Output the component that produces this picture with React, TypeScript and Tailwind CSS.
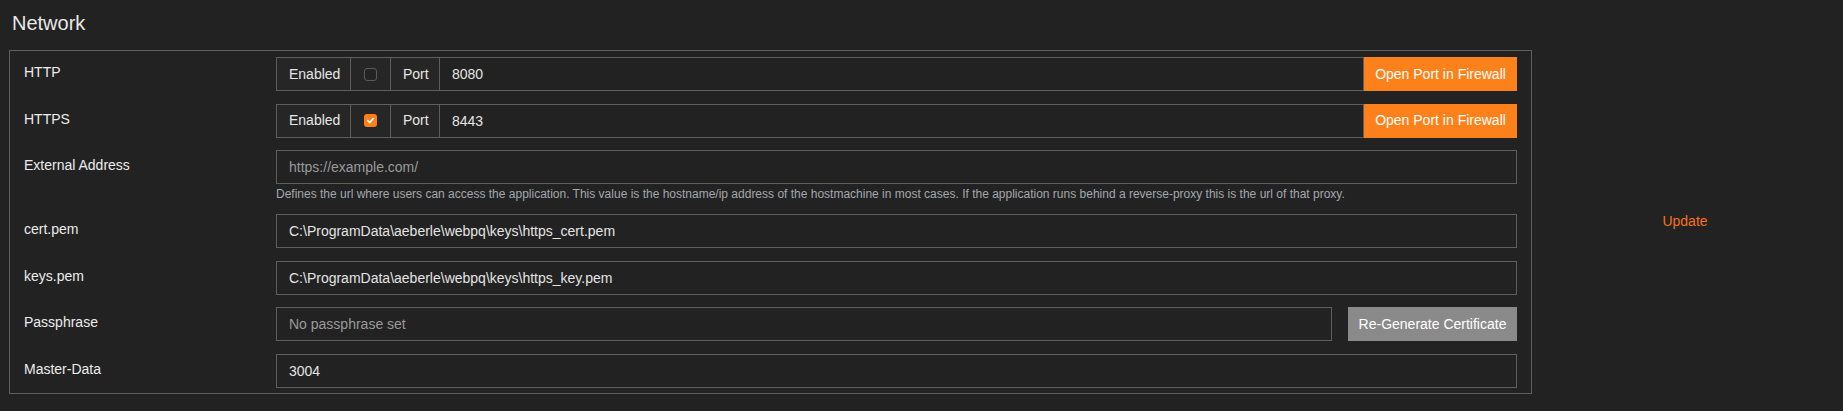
import React from 'react';

const inputClass =
  'h-[34px] w-full min-w-0 border border-[#5e5e5e] bg-[#222] px-3 text-[14px] text-[#e4e4e4] outline-none placeholder:text-[#9a9a9a]';

function Checkbox({ checked }: { checked: boolean }) {
  if (checked) {
    return (
      <span className="flex h-[13px] w-[13px] items-center justify-center rounded-[3px] bg-[#fd7f1a]">
        <svg width="9" height="9" viewBox="0 0 10 10" fill="none">
          <path d="M2 5.2 4.2 7.3 8 2.8" stroke="#fff" strokeWidth="1.8" strokeLinecap="round" strokeLinejoin="round" />
        </svg>
      </span>
    );
  }
  return <span className="block h-[13px] w-[13px] rounded-[3px] border border-[#5a5a5a] bg-[#232323]" />;
}

function PortGroup({ enabled, port }: { enabled: boolean; port: string }) {
  return (
    <div className="flex h-[34px]">
      <div className="flex w-[74px] shrink-0 items-center border-y border-l border-[#5e5e5e] bg-[#262626] pl-3">
        Enabled
      </div>
      <div className="flex w-[40px] shrink-0 items-center justify-center border-y border-l border-[#5e5e5e] bg-[#262626]">
        <Checkbox checked={enabled} />
      </div>
      <div className="flex w-[49px] shrink-0 items-center border-y border-l border-[#5e5e5e] bg-[#262626] pl-3">
        Port
      </div>
      <input
        className={`${inputClass} flex-1 ${enabled ? '' : 'bg-[#2f2f2f]'}`}
        defaultValue={port}
        readOnly
      />
      <button className="h-[34px] w-[153px] shrink-0 bg-[#fd811a] text-[14px] text-white">Open Port in Firewall</button>
    </div>
  );
}

function Row({ label, children }: { label: string; children: React.ReactNode }) {
  return (
    <div className="grid grid-cols-[252px_1fr]">
      <div className="pt-[5px] leading-[20px] text-[#ececec]">{label}</div>
      <div>{children}</div>
    </div>
  );
}

export default function App() {
  return (
    <div className="min-h-screen bg-[#222] font-['Liberation_Sans',Arial,sans-serif] text-[14px] text-[#e6e6e6]">
      <h2 className="pl-[12px] pt-[9px] text-[20px] leading-[28px] text-[#e8e8e8]">Network</h2>

      <div className="mt-[13px] flex">
        <div className="ml-[9px] flex w-[1523px] flex-col gap-[12.66px] border border-[#5e5e5e] px-[14px] pb-[5px] pt-[6px]">
          <Row label="HTTP">
            <PortGroup enabled={false} port="8080" />
          </Row>
          <Row label="HTTPS">
            <PortGroup enabled port="8443" />
          </Row>
          <Row label="External Address">
            <input className={inputClass} placeholder="https://example.com/" readOnly />
            <p className="mt-[3px] text-[12px] leading-[14px] text-[#a3a8ad]">
              Defines the url where users can access the application. This value is the hostname/ip address of the
              hostmachine in most cases. If the application runs behind a reverse-proxy this is the url of that proxy.
            </p>
          </Row>
          <Row label="cert.pem">
            <input className={inputClass} defaultValue="C:\ProgramData\aeberle\webpq\keys\https_cert.pem" readOnly />
          </Row>
          <Row label="keys.pem">
            <input className={inputClass} defaultValue="C:\ProgramData\aeberle\webpq\keys\https_key.pem" readOnly />
          </Row>
          <Row label="Passphrase">
            <div className="flex gap-[16px]">
              <input className={inputClass} placeholder="No passphrase set" readOnly />
              <button className="h-[34px] w-[169px] shrink-0 bg-[#8a8a8a] text-[14px] text-white">
                Re-Generate Certificate
              </button>
            </div>
          </Row>
          <Row label="Master-Data">
            <input className={inputClass} defaultValue="3004" readOnly />
          </Row>
        </div>

        <div className="flex flex-1 items-center justify-center pr-[5px]">
          <button className="text-[14px] text-[#f5701f]">Update</button>
        </div>
      </div>
    </div>
  );
}
